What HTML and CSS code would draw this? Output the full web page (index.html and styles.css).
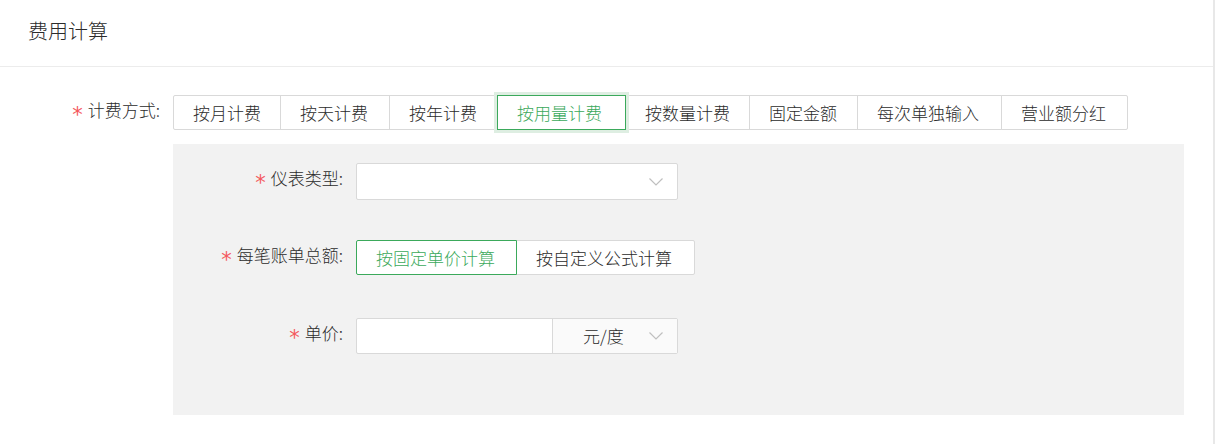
FILE: index.html
```html
<!DOCTYPE html>
<html lang="zh-CN">
<head>
<meta charset="utf-8">
<title>费用计算</title>
<link rel="stylesheet" href="styles.css">
</head>
<body>
<div class="page">
  <div class="header">费用计算</div>
  <div class="form">
    <div class="row top-row">
      <div class="label"><span class="req">*</span>计费方式:</div>
      <div class="group">
        <span class="btn">按月计费</span>
        <span class="btn">按天计费</span>
        <span class="btn">按年计费</span>
        <span class="btn active">按用量计费</span>
        <span class="btn">按数量计费</span>
        <span class="btn">固定金额</span>
        <span class="btn">每次单独输入</span>
        <span class="btn">营业额分红</span>
      </div>
    </div>
    <div class="panel">
      <div class="prow">
        <div class="plabel"><span class="req">*</span>仪表类型:</div>
        <div class="select">
          <svg class="chev" width="14" height="8" viewBox="0 0 14 8"><path d="M0.5 0.5 L7 7 L13.5 0.5" fill="none" stroke="#bfbfbf" stroke-width="1.2"/></svg>
        </div>
      </div>
      <div class="prow">
        <div class="plabel"><span class="req">*</span>每笔账单总额:</div>
        <div class="group small">
          <span class="btn active">按固定单价计算</span>
          <span class="btn">按自定义公式计算</span>
        </div>
      </div>
      <div class="prow">
        <div class="plabel"><span class="req">*</span>单价:</div>
        <div class="inputgroup">
          <div class="input"></div>
          <div class="addon">
            <span class="unit">元/度</span>
            <svg class="chev" width="14" height="8" viewBox="0 0 14 8"><path d="M0.5 0.5 L7 7 L13.5 0.5" fill="none" stroke="#bfbfbf" stroke-width="1.2"/></svg>
          </div>
        </div>
      </div>
    </div>
  </div>
</div>
</body>
</html>
```

FILE: styles.css
```css
* { box-sizing: border-box; }
html, body { margin: 0; padding: 0; background: #fff; }
body {
  font-family: "Noto Sans CJK SC", "Microsoft YaHei", sans-serif;
  font-weight: 300;
  color: #2b2b2b;
  font-size: 17px;
}
.page {
  width: 1215px;
  height: 444px;
  border-right: 2px solid #e8e8e8;
}
.header {
  height: 67px;
  padding-left: 28px;
  padding-top: 16px;
  font-size: 20px;
  line-height: 30px;
  border-bottom: 1px solid #ececec;
}
.form { padding-top: 28px; }
.row { display: flex; align-items: flex-start; }
.label {
  width: 173px;
  padding-right: 13px;
  text-align: right;
  line-height: 30px;
}
.req {
  display: inline-block;
  color: #f4595e;
  margin-right: 5px;
  font-family: "DejaVu Sans", sans-serif;
  font-weight: 400;
  font-size: 21px;
  line-height: 19px;
  position: relative;
  top: 5px;
}
.group { display: flex; }
.btn {
  height: 35px;
  line-height: 33px;
  padding: 0 19px;
  border: 1px solid #d9d9d9;
  margin-left: -1px;
  background: #fff;
  color: #2b2b2b;
  white-space: nowrap;
}
.group .btn:first-child { margin-left: 0; border-radius: 2px 0 0 2px; }
.group .btn:last-child { border-radius: 0 2px 2px 0; }
.btn.active {
  border-color: #3ba95b;
  color: #3ba95b;
  position: relative;
  z-index: 1;
}
.top-row .btn.active {
  box-shadow: 0 0 0 3px #deeee2;
}
.top-row .btn:nth-child(1) { width: 108px; }
.top-row .btn:nth-child(2) { width: 110px; }
.top-row .btn:nth-child(3) { width: 109px; }
.top-row .btn:nth-child(4) { width: 129px; }
.top-row .btn:nth-child(5) { width: 125px; }
.top-row .btn:nth-child(6) { width: 109px; }
.top-row .btn:nth-child(7) { width: 145px; }
.top-row .btn:nth-child(8) { width: 127px; }
.group.small .btn:nth-child(1) { width: 161px; }
.group.small .btn:nth-child(2) { width: 179px; }
.panel {
  margin: 14px 0 0 173px;
  width: 1011px;
  height: 271px;
  background: #f2f2f2;
  padding-top: 19px;
}
.prow {
  display: flex;
  align-items: flex-start;
  height: 77px;
}
.prow:nth-child(2) { height: 78px; }
.plabel {
  width: 183px;
  padding-right: 13px;
  text-align: right;
  line-height: 30px;
}
.select {
  width: 322px;
  height: 37px;
  background: #fff;
  border: 1px solid #d9d9d9;
  border-radius: 2px;
  display: flex;
  align-items: center;
  justify-content: flex-end;
  padding-right: 14px;
}
.inputgroup {
  display: flex;
  width: 322px;
  height: 36px;
  border: 1px solid #d9d9d9;
  border-radius: 2px;
  background: #fff;
}
.input { width: 195px; }
.addon {
  flex: 1;
  border-left: 1px solid #d9d9d9;
  background: #fafafa;
  display: flex;
  align-items: center;
  padding-left: 30px;
  padding-right: 14px;
  justify-content: space-between;
}
.unit { line-height: 34px; }
.chev { display: block; }
```
